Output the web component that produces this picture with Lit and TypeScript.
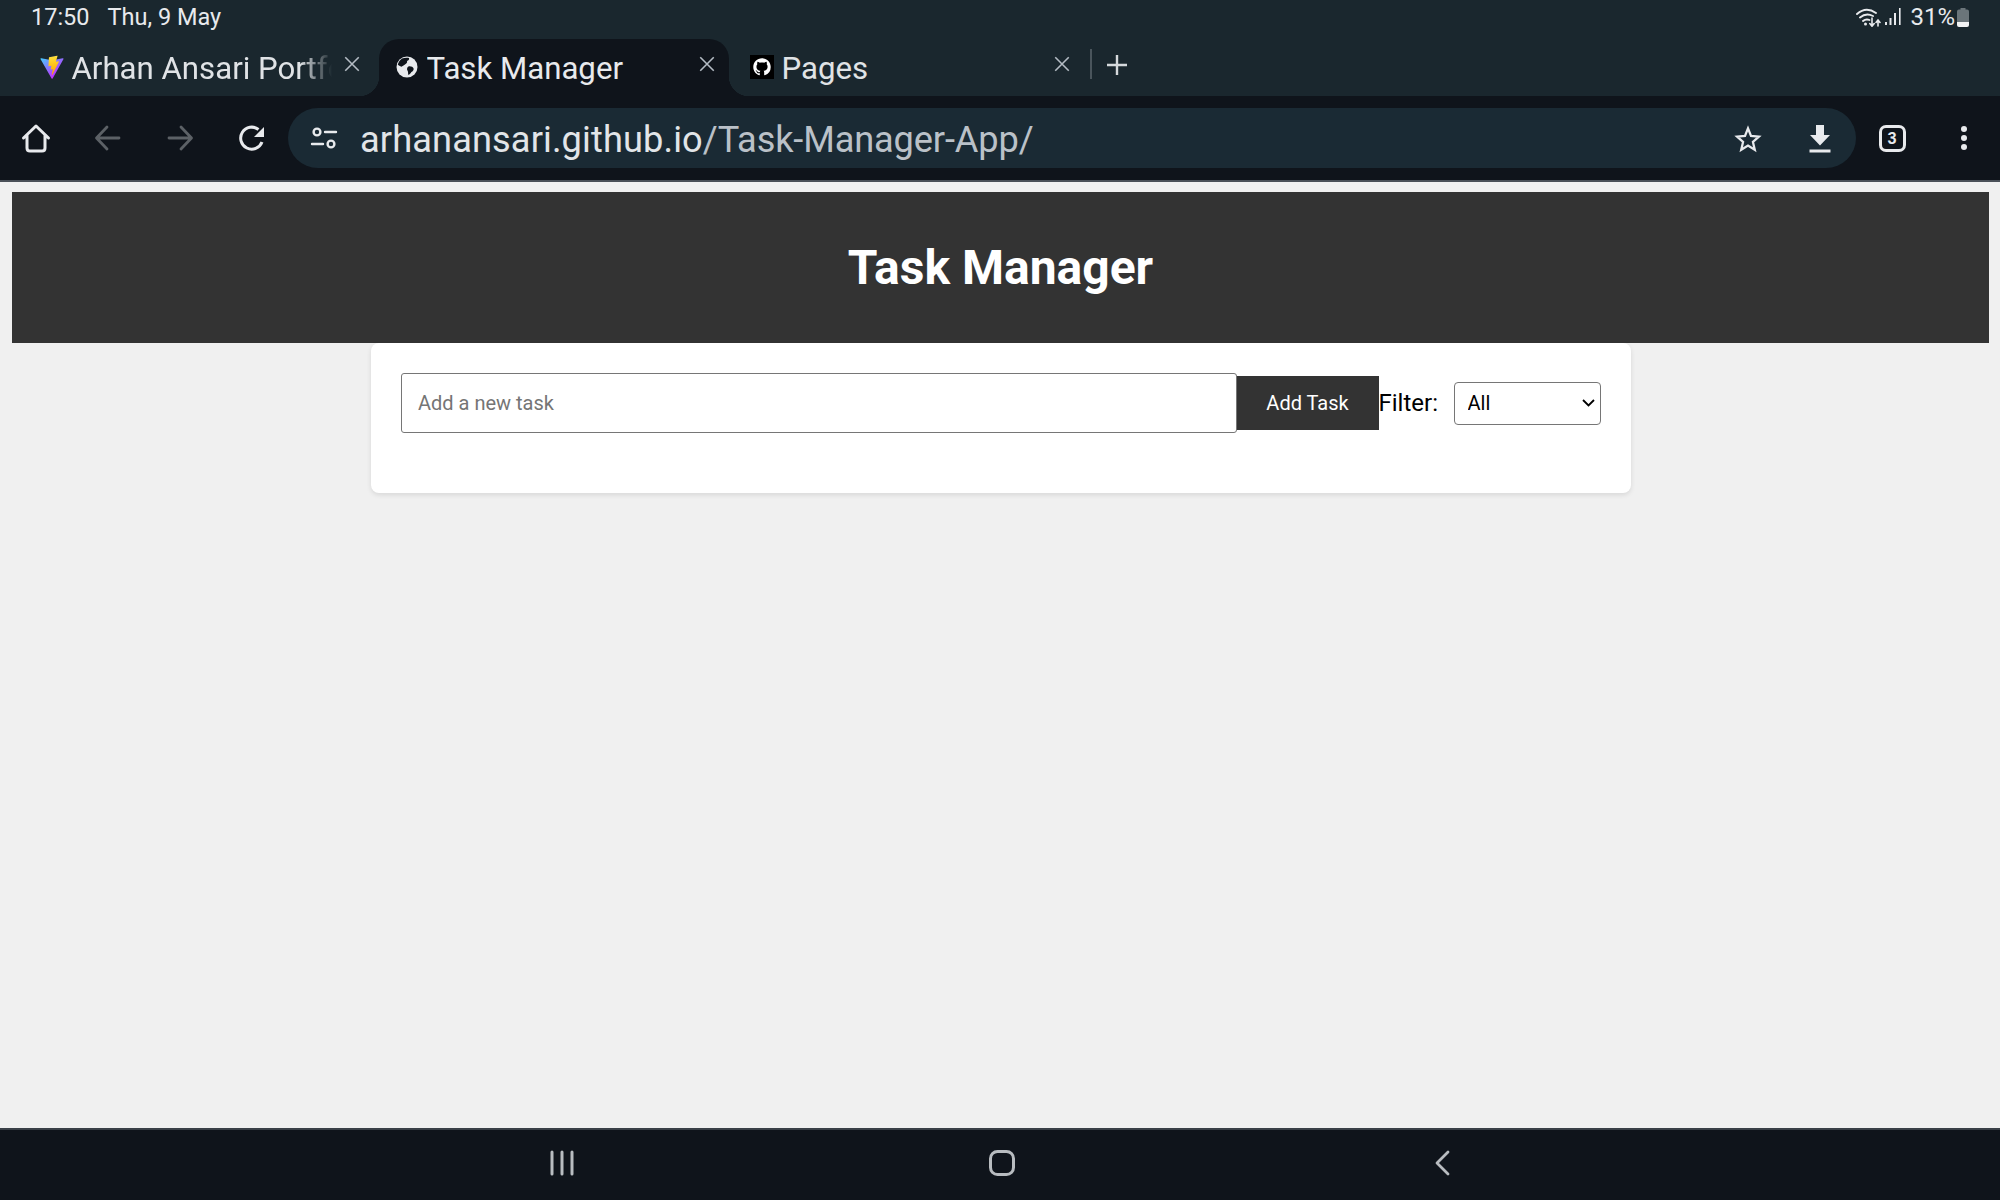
import { LitElement, html, css, svg } from "lit";
import { customElement } from "lit/decorators.js";

const closeIcon = html`<svg class="close" viewBox="0 0 16 16" width="18" height="18">
  <path d="M2 2 L14 14 M14 2 L2 14" fill="none" stroke="currentColor" stroke-width="1.4"/>
</svg>`;

const viteIcon = html`<svg viewBox="0 0 410 404" width="25" height="25">
  <defs>
    <linearGradient id="vite-a" x1="6" y1="33" x2="235" y2="344" gradientUnits="userSpaceOnUse">
      <stop offset="0" stop-color="#41d1ff"/><stop offset="1" stop-color="#bd34fe"/>
    </linearGradient>
    <linearGradient id="vite-b" x1="194" y1="8" x2="236" y2="292" gradientUnits="userSpaceOnUse">
      <stop offset="0" stop-color="#ffea83"/><stop offset="0.08" stop-color="#ffdd35"/><stop offset="1" stop-color="#ffa800"/>
    </linearGradient>
  </defs>
  <path fill="url(#vite-a)" d="M399.641 59.5246L215.643 388.545C211.844 395.338 202.084 395.378 198.228 388.618L10.5817 59.5563C6.38087 52.1896 12.6802 43.2665 21.0281 44.7586L205.223 77.6824C206.398 77.8924 207.601 77.8904 208.776 77.6763L389.119 44.8058C397.439 43.2894 403.768 52.1434 399.641 59.5246Z"/>
  <path fill="url(#vite-b)" d="M292.965 1.5744L156.801 28.2552C154.563 28.6937 152.906 30.5903 152.771 32.8664L144.395 174.33C144.198 177.662 147.258 180.248 150.51 179.498L188.42 170.749C191.967 169.931 195.172 173.055 194.443 176.622L183.18 231.775C182.422 235.487 185.907 238.661 189.532 237.56L212.947 230.446C216.577 229.344 220.065 232.527 219.297 236.242L201.398 322.875C200.278 328.294 207.486 331.249 210.492 326.603L212.5 323.5L323.454 102.072C325.312 98.3645 322.108 94.137 318.036 94.9228L279.014 102.454C275.347 103.161 272.227 99.746 273.262 96.1583L298.731 7.86689C299.767 4.27314 296.636 0.855181 292.965 1.5744Z"/>
</svg>`;

const globeIcon = html`<svg viewBox="0 0 24 24" width="24" height="24">
  <circle cx="12" cy="12" r="10.5" fill="#e8eaed"/>
  <path fill="#0f141b" d="M7 3.6 C9 2.8 12 2.6 14 3 C14.5 4.6 13.4 5.6 12 6 C12.6 7.4 11.4 8.6 10 9.4 C8.6 10.4 7.6 11 6.4 11.8 C5 11.4 3.6 10.6 2.8 9.6 C3.6 7 5 5 7 3.6 Z"/>
  <path fill="#0f141b" d="M13.4 11.4 C15.4 10.8 18 11.8 18.6 13.4 C19 14.8 17.8 16.4 16.4 17 C15.6 18.4 14.6 19.6 13.4 20 C12.8 18.6 13.4 17 12.6 15.8 C11.6 14.2 12 12.2 13.4 11.4 Z"/>
</svg>`;

const githubIcon = html`<svg viewBox="-3 -3 22 22" width="24" height="24">
  <rect x="-3" y="-3" width="22" height="22" fill="#000"/>
  <path fill="#fff" d="M8 0C3.58 0 0 3.58 0 8c0 3.54 2.29 6.53 5.47 7.59.4.07.55-.17.55-.38 0-.19-.01-.82-.01-1.49-2.01.37-2.53-.49-2.69-.94-.09-.23-.48-.94-.82-1.13-.28-.15-.68-.52-.01-.53.63-.01 1.08.58 1.23.82.72 1.21 1.87.87 2.33.66.07-.52.28-.87.51-1.07-1.78-.2-3.64-.89-3.64-3.95 0-.87.31-1.59.82-2.15-.08-.2-.36-1.02.08-2.12 0 0 .67-.21 2.2.82.64-.18 1.32-.27 2-.27s1.36.09 2 .27c1.53-1.04 2.2-.82 2.2-.82.44 1.1.16 1.92.08 2.12.51.56.82 1.27.82 2.15 0 3.07-1.87 3.75-3.65 3.95.29.25.54.73.54 1.48 0 1.07-.01 1.93-.01 2.2 0 .21.15.46.55.38A8.01 8.01 0 0 0 16 8c0-4.42-3.58-8-8-8Z"/>
</svg>`;

const icon = (body: unknown, cls = "") => html`<span class="btn ${cls}">
  <svg viewBox="0 0 32 32" width="32" height="32" fill="none" stroke="currentColor" stroke-width="2.8" stroke-linecap="round" stroke-linejoin="round">${body}</svg>
</span>`;

const homePath = svg`<path d="M3.5 16 L16 4 L28.5 16 M7 13 V26 Q7 29 10 29 H22 Q25 29 25 26 V13" stroke-width="3"/>`;
const backPath = svg`<path d="M27 16 H5 M15 5 L4.5 16 L15 27"/>`;
const fwdPath = svg`<path d="M5 16 H27 M17 5 L27.5 16 L17 27"/>`;
const reloadPath = svg`<path d="M26 20 A11 11 0 1 1 22.5 7.5" stroke-width="3" stroke-linecap="butt"/><path d="M28 5 V15 H18 Z" fill="currentColor" stroke="none"/>`;
const tunePath = svg`<g stroke-width="2.4"><circle cx="9" cy="10" r="3.4"/><path d="M17 10 H28 M4 22 H15"/><circle cx="23" cy="22" r="3.4"/></g>`;
const starPath = svg`<path transform="translate(16 17) scale(0.88) translate(-16 -16)" d="M16 4 L19.4 12.6 L28.4 13.4 L21.6 19.4 L23.7 28.2 L16 23.5 L8.3 28.2 L10.4 19.4 L3.6 13.4 L12.6 12.6 Z" stroke-linejoin="miter" stroke-width="2.6"/>`;
const downloadPath = svg`<path d="M12 3 H20 V13 H26 L16 23.5 L6 13 H12 Z" fill="currentColor" stroke="none"/><path d="M5.5 29 H26.5" stroke-width="3" stroke-linecap="butt"/>`;

@customElement("app-root")
export class AppRoot extends LitElement {
  static styles = css`
    :host {
      display: flex;
      flex-direction: column;
      height: 1200px;
      background: #f0f0f0;
      font-family: Roboto, "Noto Sans", sans-serif;
      overflow: hidden;
    }

    /* ── Browser chrome ─────────────────────────────────────────────────── */
    .status {
      height: 39px;
      flex: none;
      display: flex;
      align-items: center;
      background: #1a272e;
      color: #e8eaed;
      font-size: 23.5px;
      padding: 0 31px 5px;
      box-sizing: border-box;
    }
    .status .date { margin-left: 18px; }
    .status .right { margin-left: auto; display: flex; align-items: center; }
    .status .signal { margin-left: 3px; }
    .status .pct { margin: 0 2px 0 9px; font-size: 24px; }

    .tabs {
      height: 57px;
      flex: none;
      display: flex;
      align-items: stretch;
      background: #1a272e;
      padding-left: 24px;
      gap: 5px;
    }
    .tab {
      width: 350px;
      box-sizing: border-box;
      position: relative;
      display: flex;
      align-items: center;
      padding: 0 13px 0 16px;
      color: #e0e3e6;
      font-size: 31.2px;
    }
    .tab .fav { flex: none; width: 24px; height: 24px; display: flex; align-items: center; justify-content: center; margin-top: -1px; }
    .tab .title { margin-left: 7.5px; flex: 1; overflow: hidden; white-space: nowrap; padding-top: 1px; }
    .tab .title.fade {
      -webkit-mask-image: linear-gradient(90deg, #000 84%, transparent 96%);
      mask-image: linear-gradient(90deg, #000 84%, transparent 96%);
    }
    .tab .close { flex: none; color: #b4bcc4; margin-top: -8px; }
    .tab.active { background: #0f141b; border-radius: 20px 20px 0 0; color: #e8eaed; }
    .tab.active::before, .tab.active::after {
      content: "";
      position: absolute;
      bottom: 0;
      width: 20px;
      height: 20px;
    }
    .tab.active::before { right: 100%; background: radial-gradient(circle at 0 0, transparent 20px, #0f141b 20.5px); }
    .tab.active::after { left: 100%; background: radial-gradient(circle at 100% 0, transparent 20px, #0f141b 20.5px); }
    .divider { width: 2px; height: 30px; background: #4a555c; align-self: flex-start; margin: 10px 0 0 1px; }
    .plus { width: 24px; height: 24px; align-self: flex-start; margin: 14px 0 0 8px; color: #d5d9dc; }

    .toolbar {
      height: 84px;
      flex: none;
      display: flex;
      align-items: center;
      background: #0f141b;
      color: #e8eaed;
    }
    .btn { width: 72px; height: 60px; flex: none; display: flex; align-items: center; justify-content: center; }
    .btn.dim { color: #5c6166; }
    .omni {
      flex: 1;
      height: 60px;
      display: flex;
      align-items: center;
      background: #1a2a34;
      border-radius: 30px;
      font-size: 36.2px;
    }
    .url { flex: 1; white-space: nowrap; color: #e2e5e8; padding-top: 3px; letter-spacing: 0.12px; }
    .url span { color: #bac1c8; letter-spacing: -0.14px; }
    .count {
      width: 27px;
      height: 27px;
      box-sizing: border-box;
      border: 3px solid #e8eaed;
      border-radius: 7px;
      display: flex;
      align-items: center;
      justify-content: center;
      font-size: 16px;
      font-weight: 700;
    }
    .dots { display: flex; flex-direction: column; gap: 3px; }
    .dots i { width: 6px; height: 6px; border-radius: 50%; background: #e8eaed; }

    .edge { height: 2px; flex: none; background: #4a5058; }

    /* ── Page ───────────────────────────────────────────────────────────── */
    .page { flex: 1; padding: 10px 11px 0 12px; }
    header {
      height: 151px;
      background: #333;
      color: #fff;
      display: flex;
      align-items: center;
      justify-content: center;
    }
    h1 { margin: 0; font-size: 48px; font-weight: 700; }
    .card {
      width: 1260px;
      box-sizing: border-box;
      margin: 0 auto;
      padding: 30px 30px 60px;
      background: #fff;
      border-radius: 8px;
      box-shadow: 0 2px 5px rgba(0, 0, 0, 0.1);
      display: flex;
      align-items: center;
    }
    input {
      flex: 1;
      min-width: 0;
      height: 60px;
      box-sizing: border-box;
      padding: 0 16.5px;
      font: 20px Roboto, sans-serif;
      border: 1px solid #767676;
      border-radius: 3px;
      background: #fff;
    }
    input::placeholder { color: #757575; opacity: 1; }
    button {
      width: 142px;
      height: 54px;
      flex: none;
      border: 0;
      padding: 0;
      background: #333;
      color: #fff;
      font: 20px Roboto, sans-serif;
    }
    label { flex: none; font-size: 24px; color: #000; width: 75px; }
    .select-wrap { position: relative; flex: none; display: flex; }
    select {
      width: 147px;
      height: 43px;
      box-sizing: border-box;
      padding: 0 13px;
      font: 20px Roboto, sans-serif;
      color: #000;
      background: #fff;
      border: 1px solid #767676;
      border-radius: 4px;
      appearance: none;
      -webkit-appearance: none;
    }
    .chevron { position: absolute; right: 6px; top: 17px; pointer-events: none; }

    .nav {
      height: 72px;
      flex: none;
      display: flex;
      background: #0f141b;
      border-top: 2px solid #3a4047;
      box-sizing: border-box;
      align-items: center;
      justify-content: center;
      padding: 0 0 4px 4px;
      color: #b8bcc0;
    }
    .nav span { width: 440px; display: flex; justify-content: center; }
  `;

  render() {
    return html`
      <div class="status">
        <span>17:50</span><span class="date">Thu, 9 May</span>
        <div class="right">
          <svg viewBox="0 0 26 20" width="26" height="20" fill="none" stroke="#e8eaed" stroke-width="1.9" stroke-linecap="round">
            <path d="M1 7 Q10 -1 20 6 M4 10.5 Q10 5.5 17 9 M7 14 Q10 11.5 13.5 13"/>
            <circle cx="9.5" cy="17" r="1.5" fill="#e8eaed" stroke="none"/>
            <path d="M16 11 V19 M13.8 16.5 L16 19.2 L18.2 16.5 M22 19 V13.5 M20 15.5 L22 13 L24 15.5" stroke-width="1.6"/>
          </svg>
          <svg class="signal" viewBox="0 0 16 18" width="16" height="18" fill="#e8eaed">
            <rect x="0" y="14" width="2" height="3"/><rect x="4.5" y="10" width="2" height="7"/><rect x="9" y="5" width="2" height="12"/><rect x="14" y="0" width="1.6" height="17"/>
          </svg>
          <span class="pct">31%</span>
          <svg viewBox="0 0 12 19" width="12" height="19">
            <path d="M3.5 0 H8.5 V1.5 H10 Q12 1.5 12 3.5 V14 H0 V3.5 Q0 1.5 2 1.5 H3.5 Z" fill="#6b757a"/>
            <path d="M0 14 H12 V17 Q12 19 10 19 H2 Q0 19 0 17 Z" fill="#f2f3f4"/>
          </svg>
        </div>
      </div>
      <div class="tabs">
        <div class="tab"><span class="fav">${viteIcon}</span><span class="title fade">Arhan Ansari Portfolio</span>${closeIcon}</div>
        <div class="tab active"><span class="fav">${globeIcon}</span><span class="title">Task Manager</span>${closeIcon}</div>
        <div class="tab"><span class="fav">${githubIcon}</span><span class="title">Pages</span>${closeIcon}</div>
        <span class="divider"></span>
        <svg class="plus" viewBox="0 0 24 24"><path d="M12 2 V22 M2 12 H22" stroke="currentColor" stroke-width="2.4" fill="none"/></svg>
      </div>
      <div class="toolbar">
        ${icon(homePath)}
        ${icon(backPath, "dim")}
        ${icon(fwdPath, "dim")}
        ${icon(reloadPath)}
        <div class="omni">
          ${icon(tunePath)}
          <div class="url">arhanansari.github.io<span>/Task-Manager-App/</span></div>
          ${icon(starPath)}
          ${icon(downloadPath)}
        </div>
        <span class="btn"><span class="count">3</span></span>
        <span class="btn"><span class="dots"><i></i><i></i><i></i></span></span>
      </div>
      <div class="edge"></div>
      <div class="page">
        <header><h1>Task Manager</h1></header>
        <div class="card">
          <input type="text" placeholder="Add a new task" />
          <button>Add Task</button>
          <label>Filter:</label>
          <div class="select-wrap">
            <select><option>All</option></select>
            <svg class="chevron" viewBox="0 0 13 8" width="13" height="8"><path d="M1 1 L6.5 6.5 L12 1" fill="none" stroke="#000" stroke-width="1.8"/></svg>
          </div>
        </div>
      </div>
      <div class="nav">
        <span><svg viewBox="0 0 24 26" width="24" height="26" stroke="currentColor" stroke-width="3" stroke-linecap="round"><path d="M2 2 V24 M12 2 V24 M22 2 V24"/></svg></span>
        <span><svg viewBox="0 0 26 26" width="26" height="26" fill="none" stroke="currentColor" stroke-width="3"><rect x="1.5" y="1.5" width="23" height="23" rx="7"/></svg></span>
        <span><svg viewBox="0 0 16 26" width="16" height="26" fill="none" stroke="currentColor" stroke-width="2.8" stroke-linecap="round" stroke-linejoin="round"><path d="M14 2 L3 13 L14 24"/></svg></span>
      </div>
    `;
  }
}
